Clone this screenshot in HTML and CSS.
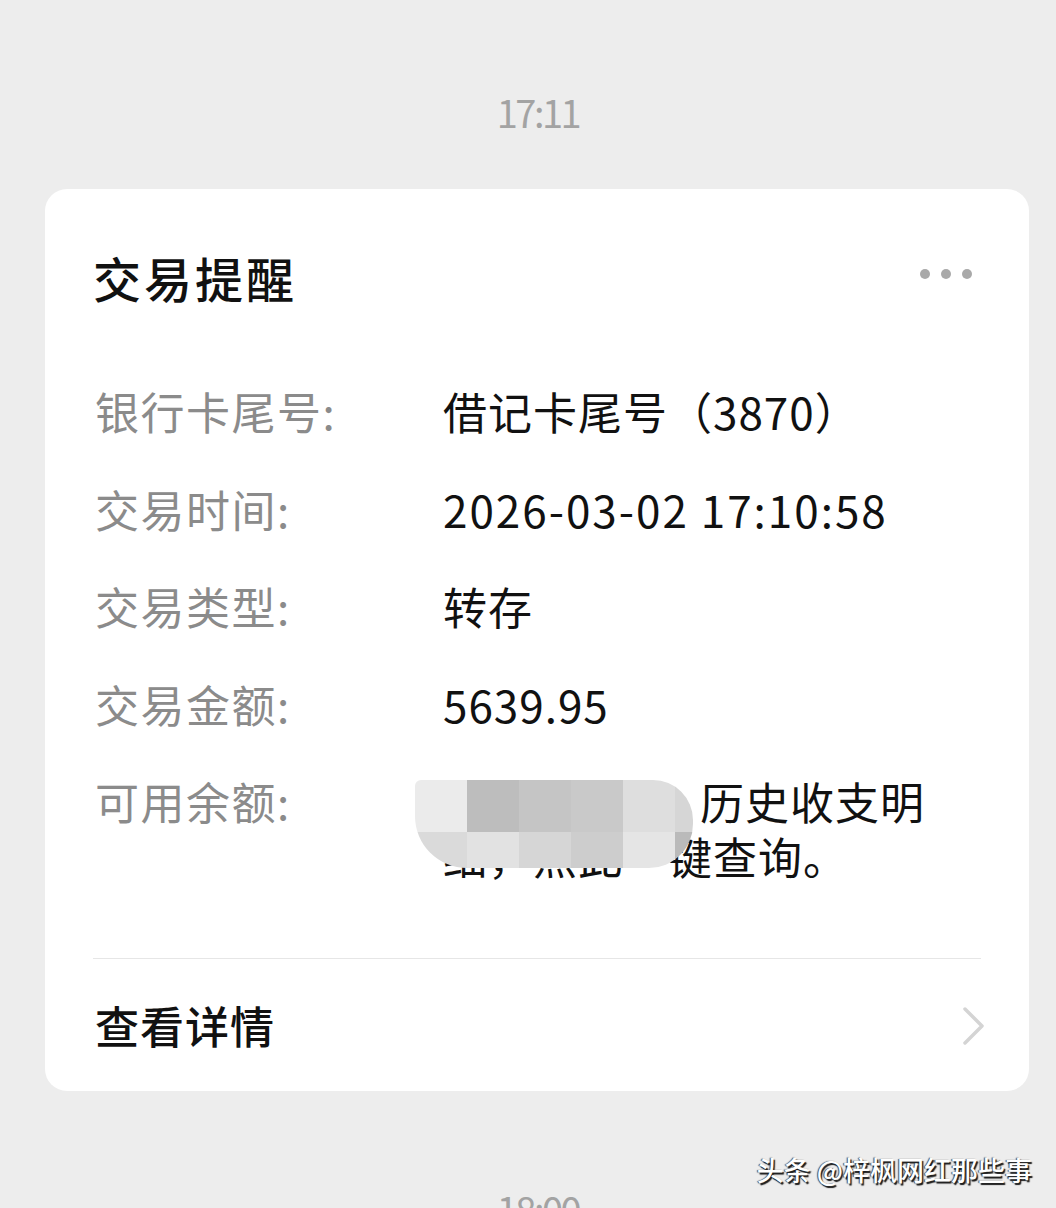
FILE: index.html
```html
<!DOCTYPE html>
<html lang="zh-CN">
<head>
  <meta charset="UTF-8" />
  <title>交易提醒</title>
  <link rel="stylesheet" href="styles.css">
</head>
<body>

  <div class="time">17:11</div>

  <!-- 交易提醒卡片 -->
  <div class="card">
    <div class="card-head">
      <h1>交易提醒</h1>
      <div class="more"><span></span><span></span><span></span></div>
    </div>

    <div class="rows">
      <div class="label">银行卡尾号:</div>
      <div class="value">借记卡尾号（3870）</div>

      <div class="label">交易时间:</div>
      <div class="value date">2026-03-02 17:10:58</div>

      <div class="label">交易类型:</div>
      <div class="value">转存</div>

      <div class="label">交易金额:</div>
      <div class="value">5639.95</div>

      <div class="label">可用余额:</div>
      <div class="value balance">
        <span class="hidden-part"></span>历史收支明细，点此一键查询。
        <div class="mosaic">
          <i class="c1"></i><i class="c2"></i><i class="c3"></i><i class="c4"></i><i class="c5"></i><i class="c6"></i>
          <i class="c7"></i><i class="c8"></i><i class="c9"></i><i class="c10"></i><i class="c11"></i><i class="c12"></i>
        </div>
      </div>
    </div>

    <div class="card-foot">
      <span>查看详情</span>
      <svg class="chevron" width="26" height="40" viewBox="0 0 26 40">
        <path d="M4 3 L21 20 L4 37" fill="none" stroke="#d4d4d4" stroke-width="3.5" stroke-linecap="round" stroke-linejoin="round"/>
      </svg>
    </div>
  </div>

  <div class="watermark">头条 @梓枫网红那些事</div>

  <div class="time next">18:00</div>

</body>
</html>
```

FILE: styles.css
```css
body {
  margin: 0;
  padding: 0;
  background: #ededed;
  font-family: "Noto Sans CJK SC", "Noto Sans", sans-serif;
  color: #111;
  overflow: hidden;
  height: 1208px;
}

.time {
  text-align: center;
  font-size: 38px;
  line-height: 44px;
  letter-spacing: -2.5px;
  color: #a3a3a3;
  padding-top: 90px;
  padding-left: 20px;
}

.card {
  margin: 55px 27px 0 45px;
  background: #fff;
  border-radius: 22px;
  padding: 0 48px;
}

.card-head {
  display: flex;
  align-items: center;
  justify-content: space-between;
  padding-top: 63px;
}

h1 {
  margin: 0;
  font-size: 48px;
  line-height: 50px;
  font-weight: 500;
  color: #111;
  letter-spacing: 3px;
}

.more {
  display: flex;
  gap: 11px;
  margin-right: 9px;
  margin-top: -6px;
}

.more span {
  width: 10px;
  height: 10px;
  border-radius: 50%;
  background: #a9a9a9;
}

.rows {
  display: grid;
  grid-template-columns: 350px 500px;
  row-gap: 42.5px;
  margin-top: 82px;
  font-size: 44px;
  line-height: 55px;
}

.label {
  color: #8b8b8b;
  padding-left: 2px;
  letter-spacing: 1.5px;
}

.value {
  color: #111;
  letter-spacing: 1px;
}

.date {
  letter-spacing: 2px;
}

.balance {
  position: relative;
}

.hidden-part {
  display: inline-block;
  width: 257px;
}

.mosaic {
  position: absolute;
  left: -28px;
  top: 6px;
  width: 278px;
  height: 88px;
  display: grid;
  grid-template-columns: 52px 52px 52px 52px 52px 18px;
  grid-template-rows: 52px 36px;
  border-radius: 6px 40px 44px 52px;
  overflow: hidden;
}

.c1 { background: #ebebeb; }
.c2 { background: #bdbdbd; }
.c3 { background: #c5c5c5; }
.c4 { background: #c9c9c9; }
.c5 { background: #dedede; }
.c6 { background: #d6d6d6; }
.c7 { background: #dadada; }
.c8 { background: #e2e2e2; }
.c9 { background: #d6d6d6; }
.c10 { background: #cdcdcd; }
.c11 { background: #e5e5e5; }
.c12 { background: #bababa; }

.card-foot {
  display: flex;
  align-items: center;
  justify-content: space-between;
  margin-top: 74px;
  border-top: 1.5px solid #e6e6e6;
  height: 132px;
  font-size: 44px;
  font-weight: 500;
  color: #111;
}

.card-foot span {
  padding-left: 2px;
  letter-spacing: 1px;
}

.chevron {
  margin-right: -6px;
  margin-top: 2px;
}

.watermark {
  text-align: right;
  padding-right: 24px;
  margin-top: 62px;
  font-size: 27px;
  line-height: 34px;
  font-weight: 500;
  color: #fff;
  text-shadow: 1.5px 1.5px 1px #1a1a1a, -1px 0 1px #444;
}

.time.next {
  padding-top: 0;
}
```
